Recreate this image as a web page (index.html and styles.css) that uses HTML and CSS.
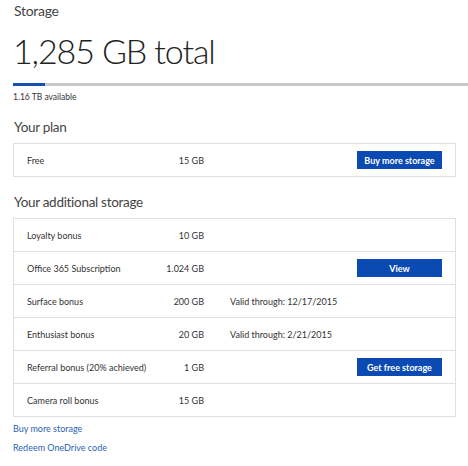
FILE: index.html
```html
<!DOCTYPE html>
<html>
<head>
<meta charset="utf-8">
<link rel="stylesheet" href="styles.css">
</head>
<body>
<div class="page">
  <div class="crumb">Storage</div>
  <h1 class="total">1,285 GB total</h1>
  <div class="bar"><div class="bar-fill" style="width:32px"></div></div>
  <div class="avail">1.16 TB available</div>

  <h2 class="section">Your plan</h2>
  <div class="box">
    <div class="row">
      <span class="label">Free</span>
      <span class="value">15 GB</span>
      <span class="extra"></span>
      <span class="action"><button class="btn">Buy more storage</button></span>
    </div>
  </div>

  <h2 class="section">Your additional storage</h2>
  <div class="box">
    <div class="row">
      <span class="label">Loyalty bonus</span>
      <span class="value">10 GB</span>
      <span class="extra"></span>
      <span class="action"></span>
    </div>
    <div class="row">
      <span class="label">Office 365 Subscription</span>
      <span class="value">1.024 GB</span>
      <span class="extra"></span>
      <span class="action"><button class="btn">View</button></span>
    </div>
    <div class="row">
      <span class="label">Surface bonus</span>
      <span class="value">200 GB</span>
      <span class="extra">Valid through: 12/17/2015</span>
      <span class="action"></span>
    </div>
    <div class="row">
      <span class="label">Enthusiast bonus</span>
      <span class="value">20 GB</span>
      <span class="extra">Valid through: 2/21/2015</span>
      <span class="action"></span>
    </div>
    <div class="row">
      <span class="label">Referral bonus (20% achieved)</span>
      <span class="value">1 GB</span>
      <span class="extra"></span>
      <span class="action"><button class="btn">Get free storage</button></span>
    </div>
    <div class="row">
      <span class="label">Camera roll bonus</span>
      <span class="value">15 GB</span>
      <span class="extra"></span>
      <span class="action"></span>
    </div>
  </div>

  <div class="links">
    <a class="link" href="#">Buy more storage</a>
    <a class="link" href="#">Redeem OneDrive code</a>
  </div>
</div>
</body>
</html>
```

FILE: styles.css
```css
html, body {
  margin: 0;
  padding: 0;
  background: #ffffff;
}
body {
  font-family: Lato, "Open Sans", "Liberation Sans", sans-serif;
  color: #333333;
  overflow: hidden;
}
.page {
  padding-left: 13px;
}
.crumb {
  font-size: 14px;
  line-height: 22px;
  letter-spacing: -0.3px;
  color: #444444;
  margin: 0 0 0 1px;
}
.total {
  font-size: 34px;
  font-weight: 300;
  line-height: 40px;
  letter-spacing: -1.1px;
  margin: 9px 0 0 0;
  color: #222222;
}
.bar {
  height: 3px;
  background: #c8c8c8;
  margin-top: 12px;
}
.bar-fill {
  height: 3px;
  background: #1a50b4;
}
.avail {
  font-size: 8.5px;
  line-height: 12px;
  margin-top: 5px;
  color: #333333;
}
.section {
  font-size: 13.5px;
  font-weight: 400;
  line-height: 20px;
  letter-spacing: -0.3px;
  margin: 14px 0 0 1px;
  color: #444444;
}
.box + .section {
  margin-top: 15px;
}
.box {
  width: 441px;
  border: 1px solid #e0e0e0;
  margin-top: 6px;
}
.row {
  display: grid;
  grid-template-columns: 120px 57px 1fr 85px;
  align-items: center;
  height: 32px;
  padding: 0 13px;
  font-size: 9px;
  border-top: 1px solid #e0e0e0;
}
.row:first-child {
  border-top: none;
}
.label {
  white-space: nowrap;
}
.value {
  text-align: right;
}
.extra {
  padding-left: 26px;
  white-space: nowrap;
}
.action {
  display: flex;
}
.btn {
  width: 85px;
  height: 18px;
  border: none;
  background: #0b4ab3;
  color: #ffffff;
  font-family: inherit;
  font-weight: 700;
  font-size: 9px;
  padding: 0;
  cursor: pointer;
}
.links {
  display: flex;
  flex-direction: column;
  gap: 7px;
  margin-top: 6px;
}
.link {
  font-size: 9px;
  line-height: 12px;
  color: #2b5fb4;
  text-decoration: none;
}
```
